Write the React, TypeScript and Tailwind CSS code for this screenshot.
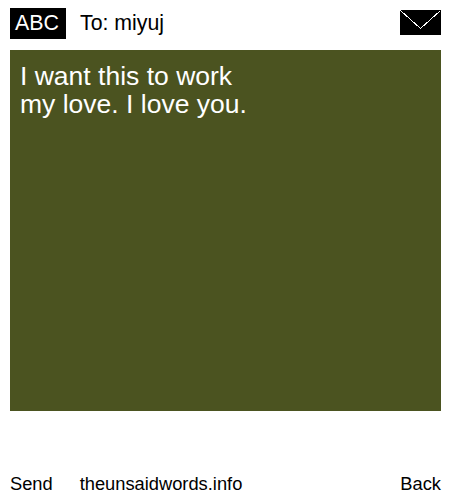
export default function App() {
  return (
    <div className="w-[450px] h-[500px] bg-white text-black flex flex-col font-['Liberation_Sans',Arial,sans-serif]">
      <div className="h-[50px] shrink-0 flex items-start pl-[10px] pr-[9px] pt-[8px]">
        <div className="w-[56px] h-[31px] bg-black text-white text-[21.4px] leading-[30px] pl-[5px]">ABC</div>
        <div className="ml-[14px] text-[21.3px] leading-[30px]">To: miyuj</div>
        <svg className="ml-auto mt-[2px]" width="41" height="25" viewBox="0 0 41 25" shapeRendering="crispEdges">
          <rect width="41" height="25" fill="#000" />
          <path d="M0.5 0.5 L20.5 18.5 L40.5 0.5" fill="none" stroke="#fff" strokeWidth="1" />
        </svg>
      </div>
      <div className="mx-[10px] mr-[9px] h-[361px] bg-[#4b5320] text-white text-[26.5px] leading-[28px] px-[10px] pt-[12px]">
        I want this to work<br />my love. I love you.
      </div>
      <div className="flex-1 flex items-end px-[10px] pb-[4px] pr-[9px] text-[18.3px] leading-[24px]">
        <span>Send</span>
        <span className="ml-[27px]">theunsaidwords.info</span>
        <span className="ml-auto">Back</span>
      </div>
    </div>
  );
}
